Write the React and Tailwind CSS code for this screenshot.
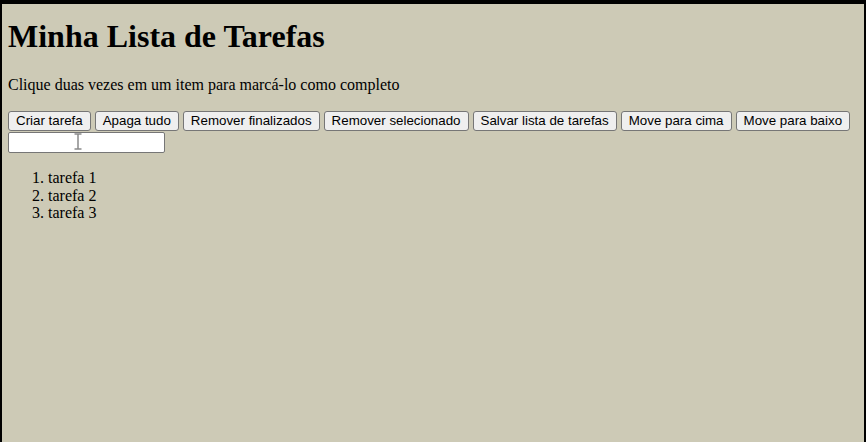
const botoes = [
  'Criar tarefa',
  'Apaga tudo',
  'Remover finalizados',
  'Remover selecionado',
  'Salvar lista de tarefas',
  'Move para cima',
  'Move para baixo',
];

const tarefas = ['tarefa 1', 'tarefa 2', 'tarefa 3'];

export default function App() {
  return (
    <div className="relative min-h-[442px] bg-[#cdcab6] border-t-4 border-x-2 border-black px-[6px] text-black font-['Liberation_Serif',serif]">
      <h1 className="mt-[14px] mb-[21px] text-[32px] leading-[37px] font-bold">Minha Lista de Tarefas</h1>
      <p className="text-[16px] leading-[18px] mb-[17px]">Clique duas vezes em um item para marcá-lo como completo</p>
      <div className="flex gap-x-[4px] h-[21px] items-start">
        {botoes.map((b) => (
          <button
            key={b}
            className="h-[20px] px-[7px] bg-[#efefef] border border-[#767676] rounded-[3px] text-[13.33px] leading-[18px] font-['Liberation_Sans',Arial,sans-serif] whitespace-nowrap"
          >
            {b}
          </button>
        ))}
      </div>
      <input
        type="text"
        className="block w-[157px] h-[21px] bg-white border border-[#767676] rounded-[2px] px-[2px] text-[13.33px] font-['Liberation_Sans',Arial,sans-serif] outline-none"
      />
      <ol className="mt-[16px] pl-10 list-decimal text-[16px] leading-[17.5px]">
        {tarefas.map((t) => (
          <li key={t}>{t}</li>
        ))}
      </ol>

      {/* ponteiro do mouse */}
      <svg className="absolute left-[71px] top-[129px]" width="10" height="17" viewBox="0 0 10 17">
        <path d="M1.5 1h7M5 1v15M1.5 16h7" stroke="#8a8a8a" strokeWidth="1.5" fill="none" />
      </svg>
    </div>
  );
}
